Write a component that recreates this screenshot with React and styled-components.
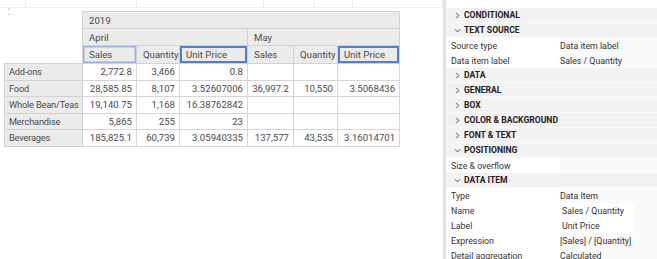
import React from 'react'
import styled, { createGlobalStyle, css } from 'styled-components';

const GlobalStyle = createGlobalStyle`
  body {
    margin: 0;
    background: #fff;
    font-family: Roboto, "Liberation Sans", sans-serif;
    color: #3d3d3d;
  }
`;

const columns = [
  { key: 'rowHead', width: 78 },
  { key: 'aprSales', width: 54 },
  { key: 'aprQty', width: 43 },
  { key: 'aprUnit', width: 68 },
  { key: 'maySales', width: 46 },
  { key: 'mayQty', width: 44 },
  { key: 'mayUnit', width: 62 },
];

const rows = [
  ['Add-ons', '2,772.8', '3,466', '0.8', '', '', ''],
  ['Food', '28,585.85', '8,107', '3.52607006', '36,997.2', '10,550', '3.5068436'],
  ['Whole Bean/Teas', '19,140.75', '1,168', '16.38762842', '', '', ''],
  ['Merchandise', '5,865', '255', '23', '', '', ''],
  ['Beverages', '185,825.1', '60,739', '3.05940335', '137,577', '43,535', '3.16014701'],
];

const sections = [
  { title: 'CONDITIONAL' },
  { title: 'TEXT SOURCE', open: true, props: [
    ['Source type', 'Data item label'],
    ['Data item label', 'Sales / Quantity'],
  ] },
  { title: 'DATA' },
  { title: 'GENERAL' },
  { title: 'BOX' },
  { title: 'COLOR & BACKGROUND' },
  { title: 'FONT & TEXT' },
  { title: 'POSITIONING', open: true, props: [
    ['Size & overflow', ''],
  ] },
  { title: 'DATA ITEM', open: true, props: [
    ['Type', 'Data Item'],
    ['Name', 'Sales / Quantity', true],
    ['Label', 'Unit Price', true],
    ['Expression', '[Sales] / [Quantity]'],
    ['Detail aggregation', 'Calculated'],
  ] },
];

const stripLines = [25, 112, 128, 50, 38, 90];

const Chevron = ({ open }) => (
  <svg width="7" height="7" viewBox="0 0 8 8">
    {open
      ? <path d="M1 2.5 L4 5.5 L7 2.5" fill="none" stroke="#333" strokeWidth="1" />
      : <path d="M2.5 1 L5.5 4 L2.5 7" fill="none" stroke="#333" strokeWidth="1" />}
  </svg>
);

export default function App() {
  return (
    <>
      <GlobalStyle />
      <Page>
        <Canvas>
          <TopStrip>
            {stripLines.map((w, i) => <StripCell key={i} style={{ width: w }} />)}
          </TopStrip>
          <Crosstab>
            <colgroup>
              {columns.map(c => <col key={c.key} style={{ width: c.width }} />)}
            </colgroup>
            <tbody>
              <tr>
                <Corner rowSpan={3}><Handle>⁚</Handle></Corner>
                <HeadCell colSpan={6}>2019</HeadCell>
              </tr>
              <tr>
                <HeadCell colSpan={3}>April</HeadCell>
                <HeadCell colSpan={3}>May</HeadCell>
              </tr>
              <MeasureRow>
                <HeadCell $select="soft">Sales</HeadCell>
                <HeadCell>Quantity</HeadCell>
                <HeadCell $select="strong">Unit Price</HeadCell>
                <HeadCell>Sales</HeadCell>
                <HeadCell>Quantity</HeadCell>
                <HeadCell $select="strong">Unit Price</HeadCell>
              </MeasureRow>
              {rows.map(r => (
                <DataRow key={r[0]}>
                  <RowHead>{r[0]}</RowHead>
                  {r.slice(1).map((v, i) => <DataCell key={i}>{v}</DataCell>)}
                </DataRow>
              ))}
            </tbody>
          </Crosstab>
        </Canvas>
        <Panel>
          {sections.map(s => (
            <React.Fragment key={s.title}>
              <SectionHeader>
                <Chevron open={s.open} />
                <span>{s.title}</span>
              </SectionHeader>
              {s.open && s.props.map(([label, value, boxed]) => (
                <PropRow key={label}>
                  <PropLabel>{label}</PropLabel>
                  <PropValue $boxed={boxed}>{value}</PropValue>
                </PropRow>
              ))}
            </React.Fragment>
          ))}
        </Panel>
      </Page>
    </>
  );
}

const Page = styled.div`
  display: flex;
  width: 657px;
  height: 259px;
  overflow: hidden;
`;

const Canvas = styled.div`
  width: 443px;
  flex-shrink: 0;
  border-right: 3px solid #e2e2e2;
`;

const TopStrip = styled.div`
  display: flex;
  height: 7px;
  border-bottom: 1px solid #ececec;
`;

const StripCell = styled.div`
  border-right: 1px solid #ececec;
`;

const Crosstab = styled.table`
  margin: 3px 0 0 4px;
  border-collapse: collapse;
  table-layout: fixed;
  width: 396px;
  font-size: 9.6px;
  color: #4a4a4a;
`;

const Corner = styled.td`
  vertical-align: top;
  padding: 0 0 0 3px;
  border: 0;
`;

const Handle = styled.span`
  display: block;
  margin-top: -3px;
  font-size: 9px;
  line-height: 6px;
  color: #666;
`;

const selection = {
  soft: css`box-shadow: inset 0 0 0 1.5px #9db3df;`,
  strong: css`box-shadow: inset 0 0 0 2px #4f7fd1;`,
};

const HeadCell = styled.td`
  height: 16px;
  padding: 0 6px;
  background: #ebebeb;
  border: 1px solid #d2d2d2;
  text-align: left;
  white-space: nowrap;
  overflow: hidden;
  ${p => p.$select && selection[p.$select]}
`;

const MeasureRow = styled.tr`
  td { height: 17px; }
`;

const DataRow = styled.tr`
  td { height: 15.5px; }
`;

const RowHead = styled.td`
  padding: 0 4px;
  background: #ebebeb;
  border: 1px solid #d2d2d2;
  white-space: nowrap;
  overflow: hidden;
  font-size: 9.2px;
  letter-spacing: -0.15px;
`;

const DataCell = styled.td`
  padding: 0 4px;
  background: #fff;
  border: 1px solid #d6d6d6;
  text-align: right;
  white-space: nowrap;
`;

const Panel = styled.div`
  flex: 1;
  margin-top: 8px;
  background: #f4f4f4;
  font-size: 8.8px;
  color: #333;
`;

const SectionHeader = styled.div`
  display: flex;
  align-items: center;
  gap: 3px;
  height: 15px;
  padding-left: 8px;
  font-weight: 700;
  font-size: 8.6px;
  color: #222;
  background: #f2f2f2;
  border-bottom: 1px solid #fafafa;
  box-sizing: border-box;
`;

const PropRow = styled.div`
  display: grid;
  grid-template-columns: 114px 1fr;
  height: 15px;
  align-items: center;
  background: #fafafa;
`;

const PropLabel = styled.div`
  padding-left: 5px;
  background: #fff;
  height: 100%;
  display: flex;
  align-items: center;
`;

const PropValue = styled.div`
  padding-left: ${p => (p.$boxed ? 2 : 0)}px;
  height: 100%;
  display: flex;
  align-items: center;
  ${p => p.$boxed && css`
    background: #fff;
    margin-right: 22px;
  `}
`;
